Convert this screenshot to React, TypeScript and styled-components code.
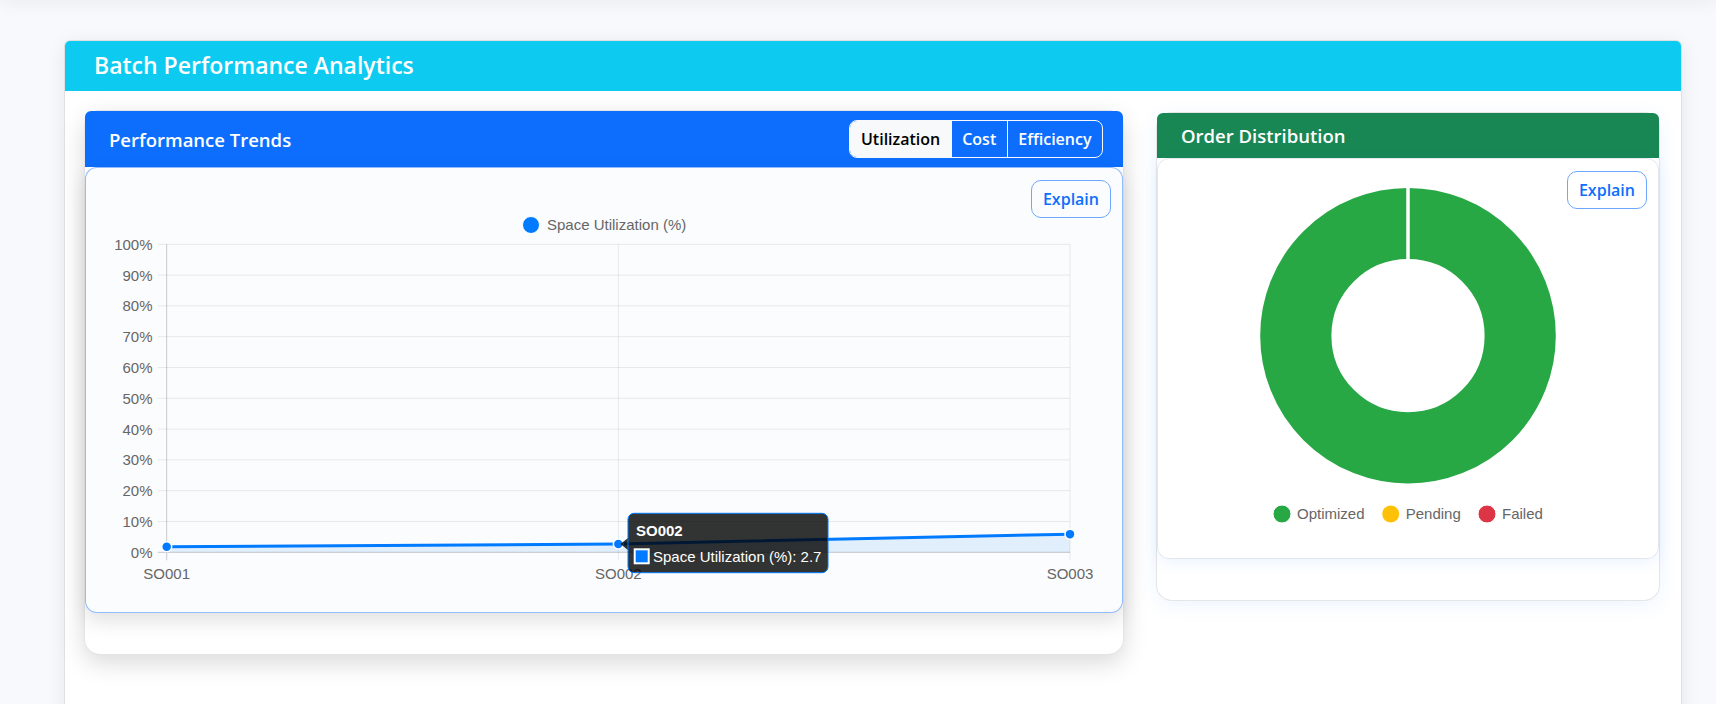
import React from "react";
import styled, { createGlobalStyle } from "styled-components";

const GlobalStyle = createGlobalStyle`
  html, body {
    margin: 0;
    padding: 0;
    overflow: hidden;
    background: #f8f9fc;
  }
  body {
    font-family: "Open Sans", "Noto Sans", sans-serif;
  }
  * {
    box-sizing: border-box;
  }
`;

const Page = styled.div`
  padding: 40px 34px 0 64px;
`;

// bottom edge of the card that sits above the viewport
const PrevCard = styled.div`
  height: 40px;
  margin: -80px -34px 40px -64px;
  background: #fff;
  box-shadow: 0 4px 18px rgba(0, 0, 0, 0.05);
`;

const AnalyticsCard = styled.section`
  background: #fff;
  border: 1px solid rgba(0, 0, 0, 0.12);
  border-radius: 6px;
  box-shadow: 0 4px 20px rgba(0, 0, 0, 0.08);
`;

const AnalyticsHeader = styled.div`
  background: #0dcaf0;
  border-radius: 5px 5px 0 0;
  padding: 10px 29px 11px;
`;

const AnalyticsTitle = styled.h5`
  margin: 0;
  color: #fff;
  font-size: 23px;
  line-height: 29px;
  font-weight: 600;
`;

const AnalyticsBody = styled.div`
  display: grid;
  grid-template-columns: minmax(0, 1040fr) minmax(0, 504fr);
  gap: 32px;
  align-items: start;
  padding: 21px 21px 80px 19px;
`;

const Panel = styled.div<{ $hovered?: boolean }>`
  background: #fff;
  border: 1px solid rgba(0, 0, 0, 0.1);
  border-radius: 16px;
  padding-bottom: 41px;
  transform: ${(p) => (p.$hovered ? "translateY(-2px)" : "none")};
  box-shadow: ${(p) =>
    p.$hovered
      ? "0 8px 25px rgba(0, 0, 0, 0.15)"
      : "0 4px 20px rgba(13, 110, 253, 0.08)"};
`;

const PanelHeader = styled.div<{ $color: string }>`
  display: flex;
  align-items: center;
  justify-content: space-between;
  background: ${(p) => p.$color};
  border-radius: 6px 6px 0 0;
  padding: 9px 20px 9px 24px;
  min-height: 45px;
`;

const PanelTitle = styled.h6`
  margin: 0;
  color: #fff;
  font-size: 18.5px;
  line-height: 27px;
  font-weight: 600;
`;

const ToggleGroup = styled.div`
  display: flex;
  border: 1px solid #f8f9fa;
  border-radius: 8px;
  overflow: hidden;
`;

const ToggleButton = styled.button<{ $active?: boolean }>`
  font-family: "Open Sans", "Noto Sans", sans-serif;
  font-size: 16px;
  line-height: 24px;
  font-weight: 600;
  padding: 6px 10.5px;
  border: 0;
  border-left: 1px solid #f8f9fa;
  background: ${(p) => (p.$active ? "#f8f9fa" : "transparent")};
  color: ${(p) => (p.$active ? "#000" : "#fff")};
  &:first-child {
    border-left: 0;
  }
`;

const ChartBox = styled.div<{ $hovered?: boolean; $bg?: string }>`
  position: relative;
  background: ${(p) => p.$bg || "#fff"};
  border: 1px solid
    ${(p) => (p.$hovered ? "rgba(13, 110, 253, 0.45)" : "#e3e8ef")};
  border-radius: 12px;
  box-shadow: ${(p) =>
    p.$hovered
      ? "0 8px 20px rgba(0, 0, 0, 0.12)"
      : "0 4px 15px rgba(13, 110, 253, 0.08)"};
`;

const ExplainButton = styled.button`
  position: absolute;
  top: 12px;
  right: 11px;
  font-family: "Open Sans", "Noto Sans", sans-serif;
  font-size: 16px;
  line-height: 24px;
  font-weight: 600;
  padding: 6px 11px;
  color: #0d6efd;
  background: transparent;
  border: 1px solid #6ea8fe;
  border-radius: 10px;
`;

const ChartSvg = styled.svg`
  display: block;
  font-family: "Liberation Sans", Arial, sans-serif;
  font-size: 15px;
`;

const labels = ["SO001", "SO002", "SO003"];
const values = [1.8, 2.7, 5.9];

const TrendChart = () => {
  const left = 80.7;
  const right = 984;
  const top = 76.3;
  const bottom = 384.3;
  const xFor = (i: number) => left + (i * (right - left)) / (labels.length - 1);
  const yFor = (v: number) => bottom - (v / 100) * (bottom - top);
  const ticks = [100, 90, 80, 70, 60, 50, 40, 30, 20, 10, 0];
  const pts = values.map((v, i) => [xFor(i), yFor(v)]);
  const line = pts.map((p) => p.join(",")).join(" ");
  const area = `${line} ${right},${bottom} ${left},${bottom}`;
  const tip = { x: 542, y: 345.3, w: 200, h: 59.4 };
  const hover = pts[1];

  return (
    <ChartSvg width="1036" height="444" viewBox="0 0 1036 444">
      <circle cx="445" cy="57" r="8.5" fill="#007bff" stroke="#fff" strokeWidth="1" />
      <text x="461" y="61.5" fill="#666">
        Space Utilization (%)
      </text>

      {ticks.map((t) => (
        <g key={t}>
          <line x1={left - 9} x2={right} y1={yFor(t)} y2={yFor(t)} stroke="rgba(0,0,0,0.08)" />
          <text x="66.5" y={yFor(t) + 5.5} fill="#666" textAnchor="end">
            {t}%
          </text>
        </g>
      ))}
      {labels.map((l, i) => (
        <g key={l}>
          <line
            x1={xFor(i)}
            x2={xFor(i)}
            y1={top}
            y2={bottom + 8}
            stroke={i === 0 ? "rgba(0,0,0,0.2)" : "rgba(0,0,0,0.08)"}
          />
          <text x={xFor(i)} y="411.3" fill="#666" textAnchor="middle">
            {l}
          </text>
        </g>
      ))}
      <line x1={left - 9} x2={right} y1={bottom} y2={bottom} stroke="rgba(0,0,0,0.14)" />

      <polygon points={area} fill="rgba(0,123,255,0.1)" />
      <polyline points={line} fill="none" stroke="#007bff" strokeWidth="3" strokeLinejoin="round" />
      {pts.map(([x, y], i) => (
        <circle key={i} cx={x} cy={y} r="5" fill="#007bff" stroke="#fff" strokeWidth="1.5" />
      ))}

      <polygon
        points={`${tip.x},${hover[1] - 6} ${hover[0] + 2},${hover[1]} ${tip.x},${hover[1] + 6}`}
        fill="rgba(0,0,0,0.8)"
      />
      <rect
        x={tip.x}
        y={tip.y}
        width={tip.w}
        height={tip.h}
        rx="6"
        fill="rgba(0,0,0,0.8)"
        stroke="#007bff"
        strokeWidth="1"
      />
      <text x={tip.x + 8} y={tip.y + 22.4} fill="#fff" fontWeight="bold">
        SO002
      </text>
      <rect x={tip.x + 5.7} y={tip.y + 35} width="16" height="16" fill="#fff" />
      <rect x={tip.x + 7.7} y={tip.y + 37} width="12" height="12" fill="#007bff" />
      <text x={tip.x + 25} y={tip.y + 48.2} fill="#fff">
        Space Utilization (%): 2.7
      </text>
    </ChartSvg>
  );
};

const slices = [
  { label: "Optimized", color: "#28a745", x: 124 },
  { label: "Pending", color: "#ffc107", x: 232.7 },
  { label: "Failed", color: "#dc3545", x: 329 },
];

const DonutChart = () => {
  const cx = 250;
  const cy = 176.7;
  const outer = 147.8;
  const inner = 76.6;
  return (
    <ChartSvg width="500" height="399" viewBox="0 0 500 399">
      <circle
        cx={cx}
        cy={cy}
        r={(outer + inner) / 2}
        fill="none"
        stroke="#28a745"
        strokeWidth={outer - inner}
      />
      <line x1={cx} x2={cx} y1={cy - outer - 1} y2={cy - inner + 1} stroke="#fff" strokeWidth="3.5" />
      {slices.map((s) => (
        <g key={s.label}>
          <circle cx={s.x} cy="355" r="9" fill={s.color} stroke="#fff" strokeWidth="1" />
          <text x={s.x + 15} y="360.3" fill="#666">
            {s.label}
          </text>
        </g>
      ))}
    </ChartSvg>
  );
};

const App = () => {
  return (
    <Page>
      <GlobalStyle />
      <PrevCard />
      <AnalyticsCard>
        <AnalyticsHeader>
          <AnalyticsTitle>Batch Performance Analytics</AnalyticsTitle>
        </AnalyticsHeader>
        <AnalyticsBody>
          <Panel $hovered>
            <PanelHeader $color="#0d6efd">
              <PanelTitle>Performance Trends</PanelTitle>
              <ToggleGroup>
                <ToggleButton $active>Utilization</ToggleButton>
                <ToggleButton>Cost</ToggleButton>
                <ToggleButton>Efficiency</ToggleButton>
              </ToggleGroup>
            </PanelHeader>
            <ChartBox $hovered $bg="#fbfcfd">
              <ExplainButton>Explain</ExplainButton>
              <TrendChart />
            </ChartBox>
          </Panel>
          <Panel>
            <PanelHeader $color="#198754">
              <PanelTitle>Order Distribution</PanelTitle>
            </PanelHeader>
            <ChartBox>
              <ExplainButton>Explain</ExplainButton>
              <DonutChart />
            </ChartBox>
          </Panel>
        </AnalyticsBody>
      </AnalyticsCard>
    </Page>
  );
};

export default App;
